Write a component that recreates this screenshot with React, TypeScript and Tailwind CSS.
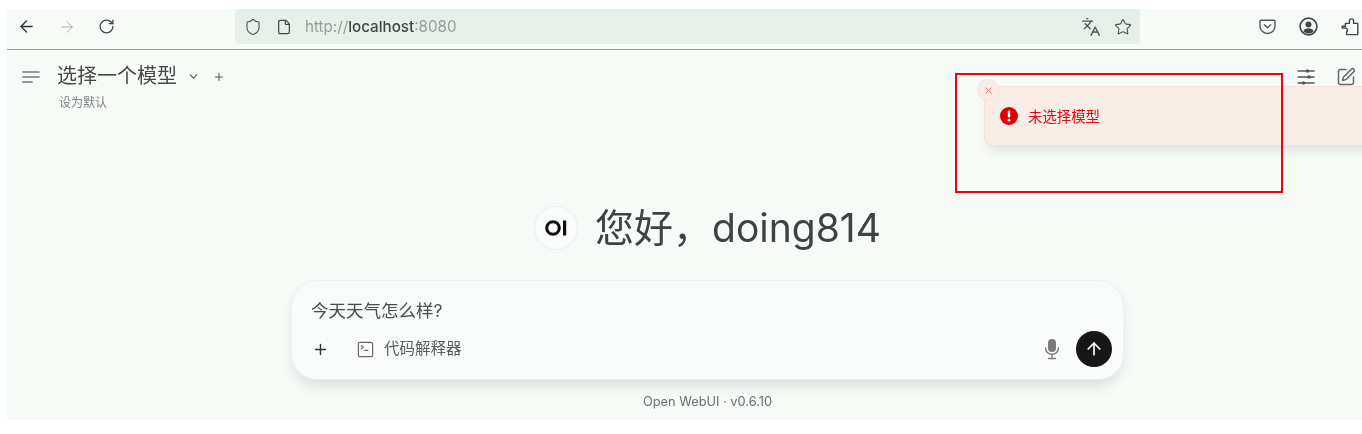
import React from "react";
import { ArrowLeft, ArrowRight, RotateCw, Shield, File, Languages, Star, Plus, ChevronDown, SquarePen, X, SquareTerminal, ArrowUp } from "lucide-react";

const Stack = { fontFamily: '"Inter","Noto Sans CJK SC",sans-serif' };

export default function App() {
  return (
    <div className="relative w-[1362px] h-[434px] overflow-hidden bg-white pt-[9px] pl-[7px] pb-[14px] text-[#3c3f3d] blur-[0.4px]" style={Stack}>
      <div className="flex flex-col h-full bg-[#f7fbf8]">
        {/* browser toolbar */}
        <div className="flex items-center h-[41px] shrink-0 border-b border-[#9a9c9a] pr-[3px] pb-[5px]">
          <div className="flex items-center gap-[22px] pl-[10px] w-[228px]">
            <ArrowLeft size={19} strokeWidth={1.7} className="text-[#333]" />
            <ArrowRight size={18} strokeWidth={1.2} className="text-[#aaa]" />
            <RotateCw size={17} strokeWidth={1.8} className="text-[#444]" />
          </div>
          <div className="flex items-center h-[35px] w-[905px] rounded-[4px] bg-[#e6efe8] pl-[9px] pr-[8px]">
            <Shield size={18} strokeWidth={1.5} className="text-[#555]" />
            <File size={16} strokeWidth={1.8} className="ml-[14px] text-[#444]" />
            <span className="ml-[13px] mt-[2px] text-[15.2px] text-[#9a9e9b]">http://<span className="font-medium text-[#444]">localhost</span>:8080</span>
            <div className="ml-auto flex items-center gap-[13px]">
              <Languages size={20} strokeWidth={1.6} className="text-[#555]" />
              <Star size={18} strokeWidth={1.5} className="text-[#555]" />
            </div>
          </div>
          <div className="ml-auto flex items-center gap-[23px]">
            <svg width="17" height="17" viewBox="0 0 17 17" fill="none" stroke="#555" strokeWidth="1.4">
              <path d="M2 2.2h13a1 1 0 0 1 1 1v4.8a7.5 7.5 0 0 1-15 0V3.2a1 1 0 0 1 1-1z" />
              <path d="M5.3 6.8l3.2 2.9 3.2-2.9" strokeLinecap="round" strokeLinejoin="round" />
            </svg>
            <svg width="19" height="19" viewBox="0 0 19 19">
              <circle cx="9.5" cy="9.5" r="8.4" fill="none" stroke="#444" strokeWidth="1.6" />
              <circle cx="9.5" cy="7.4" r="3" fill="#444" />
              <path d="M4.3 14.2c1-2.2 3-2.9 5.2-2.9s4.2.7 5.2 2.9a7 7 0 0 1-10.4 0z" fill="#444" />
            </svg>
            <svg width="18" height="19" viewBox="0 0 18 19" fill="none" stroke="#444" strokeWidth="1.4" strokeLinejoin="round">
              <path d="M1.2 9.2h3.2V6.4h4V4a2.1 2.1 0 0 1 4.2 0v2.4h4.2v11.2H5.6v-2.7a2.2 2.2 0 0 0-1.1-3.9H1.2z" />
            </svg>
          </div>
        </div>

        {/* app header */}
        <div className="flex items-start justify-between h-[65px] shrink-0 pl-[15px] pr-[6px] pt-[14px]">
          <div className="flex items-start">
            <svg width="18" height="14" viewBox="0 0 18 14" className="mt-[6px]" fill="none" stroke="#777" strokeWidth="1.7" strokeLinecap="round">
              <path d="M1 2h16M1 7h16M1 12h9" />
            </svg>
            <div className="ml-[17px]">
              <div className="flex items-center h-[25px]">
                <span className="text-[20px] leading-[25px] text-[#454845]">选择一个模型</span>
                <ChevronDown size={13} strokeWidth={2} className="ml-[10px] text-[#555]" />
                <Plus size={12} strokeWidth={2} className="ml-[13px] text-[#555]" />
              </div>
              <div className="ml-[2px] mt-[6px] text-[12px] leading-[16px] text-[#808380]">设为默认</div>
            </div>
          </div>
          <div className="flex items-center gap-[21px] mt-[3px]">
            <svg width="18" height="18" viewBox="0 0 18 18" stroke="#555" strokeWidth="1.5" strokeLinecap="round">
              <path d="M1 3h16M1 9h16M1 15h16" />
              <circle cx="10.5" cy="3" r="1.7" fill="#555" strokeWidth="0" />
              <circle cx="12" cy="9" r="1.7" fill="#555" strokeWidth="0" />
              <circle cx="6.5" cy="15" r="1.7" fill="#555" strokeWidth="0" />
            </svg>
            <SquarePen size={20} strokeWidth={1.8} className="text-[#666]" />
          </div>
        </div>

        {/* greeting */}
        <div className="flex items-center justify-center h-[44px] mt-[91px] shrink-0 pl-[46px]">
          <div className="flex items-center justify-center w-[44px] h-[44px] rounded-full border border-[#edf0ee] bg-[#f9fcfa]">
            <svg width="24" height="18" viewBox="0 0 24 18">
              <circle cx="9" cy="9" r="6.3" fill="none" stroke="#0d0d0d" strokeWidth="3" />
              <rect x="19" y="1.5" width="3.2" height="15" fill="#0d0d0d" />
            </svg>
          </div>
          <span className="ml-[17px] text-[39px] leading-[44px] text-[#3f4240]">您好，doing814</span>
        </div>

        {/* input card */}
        <div className="flex flex-col w-[833px] h-[100px] mt-[30px] ml-[284px] shrink-0 rounded-[26px] border border-[#eef1ef] bg-[#f8fbf9] shadow-[0_8px_16px_-4px_rgba(0,0,0,0.14)] px-[19px] pb-[12px] pt-[18px]">
          <div className="text-[17.5px] leading-[24px] text-[#4a4d4b]">今天天气怎么样?</div>
          <div className="flex items-center mt-auto">
            <Plus size={17} strokeWidth={2} className="text-[#333] ml-[1px]" />
            <SquareTerminal size={19} strokeWidth={1.5} className="ml-[27px] text-[#666]" />
            <span className="ml-[9px] text-[15.5px] leading-[20px] text-[#5c5f5d]">代码解释器</span>
            <svg width="16" height="22" viewBox="0 0 16 22" className="ml-auto mr-[16px]" fill="#7a7a7c">
              <rect x="4" y="1" width="8" height="13" rx="4" />
              <path d="M1.5 10a6.5 6.5 0 0 0 13 0" fill="none" stroke="#7a7a7c" strokeWidth="1.4" strokeLinecap="round" />
              <path d="M8 16.5V20M4.5 20.5h7" stroke="#7a7a7c" strokeWidth="1.4" strokeLinecap="round" />
            </svg>
            <div className="flex items-center justify-center w-[36px] h-[36px] rounded-full bg-[#171717] -mr-[8px]">
              <ArrowUp size={20} strokeWidth={2} className="text-white" />
            </div>
          </div>
        </div>

        <div className="mt-[14px] pl-[46px] text-center text-[12.8px] leading-[16px] text-[#6b6e6c]">Open WebUI · v0.6.10</div>
      </div>

      {/* toast */}
      <div className="absolute left-[984px] top-[86px] w-[400px] h-[60px] rounded-[8px] border border-[#f7dfda] bg-[#f8ece7] shadow-[0_8px_12px_-4px_rgba(0,0,0,0.1)] flex items-center pl-[15px]">
        <svg width="18" height="18" viewBox="0 0 18 18" className="shrink-0">
          <circle cx="9" cy="9" r="9" fill="#e00000" />
          <rect x="7.8" y="3.5" width="2.4" height="7" rx="1.1" fill="#fff" />
          <circle cx="9" cy="13.2" r="1.4" fill="#fff" />
        </svg>
        <span className="ml-[10px] mt-[2px] text-[14.4px] text-[#e00b12]">未选择模型</span>
      </div>
      <div className="absolute left-[977px] top-[79px] flex items-center justify-center w-[22px] h-[22px] rounded-full border border-[#f5e3df] bg-[#f9ece8]">
        <X size={11} strokeWidth={1.6} className="text-[#e8535a]" />
      </div>

      {/* annotation */}
      <div className="absolute left-[955px] top-[73px] w-[328px] h-[120px] border-2 border-[#f5000f]" />
    </div>
  );
}
